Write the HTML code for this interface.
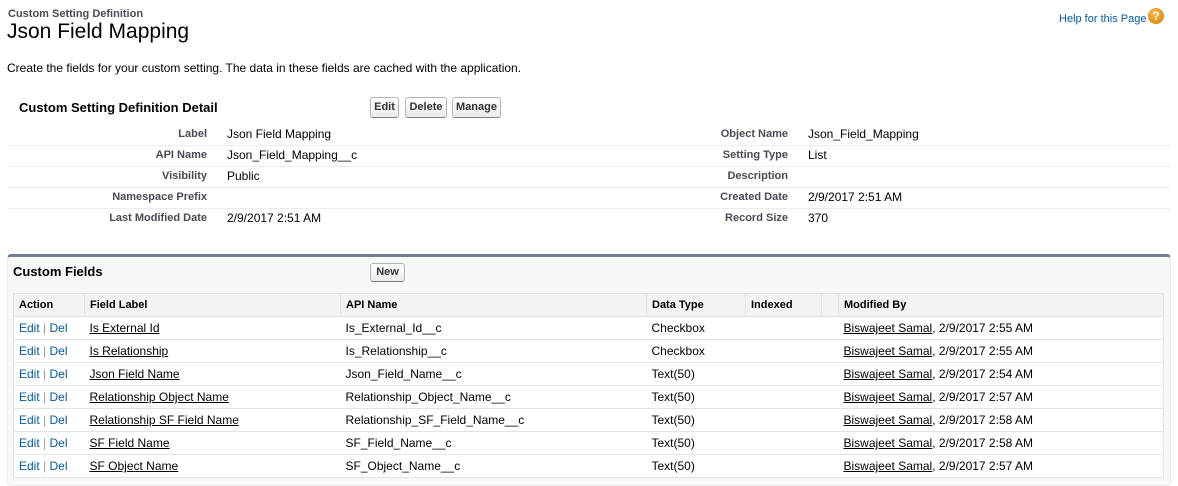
<!DOCTYPE html>
<html><head><meta charset="utf-8"><style>
body{margin:0;width:1178px;height:486px;background:#fff;font-family:"Liberation Sans",Arial,sans-serif;font-size:12px;color:#000;position:relative;overflow:hidden}
.a{position:absolute;white-space:nowrap}
.btn{position:absolute;height:19px;border:1px solid #b5b5b5;border-bottom-color:#7f7f7f;border-radius:3px;background:linear-gradient(#fff,#ececec);font-weight:bold;font-size:11px;color:#333;line-height:19px;text-align:center;box-sizing:border-box;height:21px}
.lbl{position:absolute;width:200px;text-align:right;font-weight:bold;font-size:11px;color:#4a4a56}
.sep{position:absolute;left:8px;width:1162px;height:1px;background:#e3deb8;background:#ececec}
table{position:absolute;left:13px;top:293px;width:1151px;border-collapse:collapse;background:#fff;border:1px solid #e0e3e5}
th{background:#f2f3f3;font-size:11px;text-align:left;font-weight:bold;height:22px;padding:0 5px;border-left:1px solid #e0e3e5;border-bottom:1px solid #e0e3e5;color:#000}
td{height:22px;padding:0 5px;border-top:1px solid #e3e3e3;font-size:12px;color:#000}
td a{color:#000;text-decoration:underline}
.act{color:#015ba7}
.act span{color:#999}
</style></head><body>
<div class="a" style="left:8px;top:8px;font-size:11px;font-weight:bold;color:#4a4a56">Custom Setting Definition</div>
<div class="a" style="left:7px;top:20px;font-size:21px;color:#000">Json Field Mapping</div>
<div class="a" style="left:1059px;top:13px;font-size:11px;color:#015ba7">Help for this Page</div>
<div class="a" style="left:1148px;top:8px;width:16px;height:16px;border-radius:50%;background:radial-gradient(circle at 40% 35%,#f7b640,#d47f05);color:#fff;font-weight:bold;font-size:12px;text-align:center;line-height:16px">?</div>
<div class="a" style="left:7px;top:61px;font-size:12px;color:#000">Create the fields for your custom setting. The data in these fields are cached with the application.</div>
<div class="a" style="left:19px;top:100px;font-size:13px;font-weight:bold">Custom Setting Definition Detail</div>
<div class="btn" style="left:370px;top:97px;width:29px">Edit</div>
<div class="btn" style="left:405px;top:97px;width:42px">Delete</div>
<div class="btn" style="left:452px;top:97px;width:49px">Manage</div>

<div class="lbl" style="left:7px;top:128px">Label</div><div class="a" style="left:227px;top:127px">Json Field Mapping</div>
<div class="lbl" style="left:588px;top:128px">Object Name</div><div class="a" style="left:808px;top:127px">Json_Field_Mapping</div>
<div class="sep" style="top:145px"></div>
<div class="lbl" style="left:7px;top:149px">API Name</div><div class="a" style="left:227px;top:148px">Json_Field_Mapping__c</div>
<div class="lbl" style="left:588px;top:149px">Setting Type</div><div class="a" style="left:808px;top:148px">List</div>
<div class="sep" style="top:166px"></div>
<div class="lbl" style="left:7px;top:170px">Visibility</div><div class="a" style="left:227px;top:169px">Public</div>
<div class="lbl" style="left:588px;top:170px">Description</div>
<div class="sep" style="top:187px"></div>
<div class="lbl" style="left:7px;top:191px">Namespace Prefix</div>
<div class="lbl" style="left:588px;top:191px">Created Date</div><div class="a" style="left:808px;top:190px">2/9/2017 2:51 AM</div>
<div class="sep" style="top:208px"></div>
<div class="lbl" style="left:7px;top:212px">Last Modified Date</div><div class="a" style="left:227px;top:211px">2/9/2017 2:51 AM</div>
<div class="lbl" style="left:588px;top:212px">Record Size</div><div class="a" style="left:808px;top:211px">370</div>

<div class="a" style="left:7px;top:254px;width:1162px;height:228px;background:#f8f8f8;border-top:3px solid #747e96;border:1px solid #eaeaea;border-top:3px solid #747e96;border-radius:4px"></div>
<div class="a" style="left:13px;top:264px;font-size:13px;font-weight:bold">Custom Fields</div>
<div class="btn" style="left:370px;top:263px;width:35px;height:19px;line-height:17px">New</div>
<table>
<tr><th style="width:60px;border-left:none">Action</th><th style="width:245px">Field Label</th><th style="width:295px">API Name</th><th style="width:88px">Data Type</th><th style="width:65px">Indexed</th><th style="width:6px"></th><th>Modified By</th></tr>
<tr><td class="act">Edit <span>|</span> Del</td><td><a>Is External Id</a></td><td>Is_External_Id__c</td><td>Checkbox</td><td></td><td></td><td><a>Biswajeet Samal</a>, 2/9/2017 2:55 AM</td></tr>
<tr><td class="act">Edit <span>|</span> Del</td><td><a>Is Relationship</a></td><td>Is_Relationship__c</td><td>Checkbox</td><td></td><td></td><td><a>Biswajeet Samal</a>, 2/9/2017 2:55 AM</td></tr>
<tr><td class="act">Edit <span>|</span> Del</td><td><a>Json Field Name</a></td><td>Json_Field_Name__c</td><td>Text(50)</td><td></td><td></td><td><a>Biswajeet Samal</a>, 2/9/2017 2:54 AM</td></tr>
<tr><td class="act">Edit <span>|</span> Del</td><td><a>Relationship Object Name</a></td><td>Relationship_Object_Name__c</td><td>Text(50)</td><td></td><td></td><td><a>Biswajeet Samal</a>, 2/9/2017 2:57 AM</td></tr>
<tr><td class="act">Edit <span>|</span> Del</td><td><a>Relationship SF Field Name</a></td><td>Relationship_SF_Field_Name__c</td><td>Text(50)</td><td></td><td></td><td><a>Biswajeet Samal</a>, 2/9/2017 2:58 AM</td></tr>
<tr><td class="act">Edit <span>|</span> Del</td><td><a>SF Field Name</a></td><td>SF_Field_Name__c</td><td>Text(50)</td><td></td><td></td><td><a>Biswajeet Samal</a>, 2/9/2017 2:58 AM</td></tr>
<tr><td class="act">Edit <span>|</span> Del</td><td><a>SF Object Name</a></td><td>SF_Object_Name__c</td><td>Text(50)</td><td></td><td></td><td><a>Biswajeet Samal</a>, 2/9/2017 2:57 AM</td></tr>
</table>
</body></html>
